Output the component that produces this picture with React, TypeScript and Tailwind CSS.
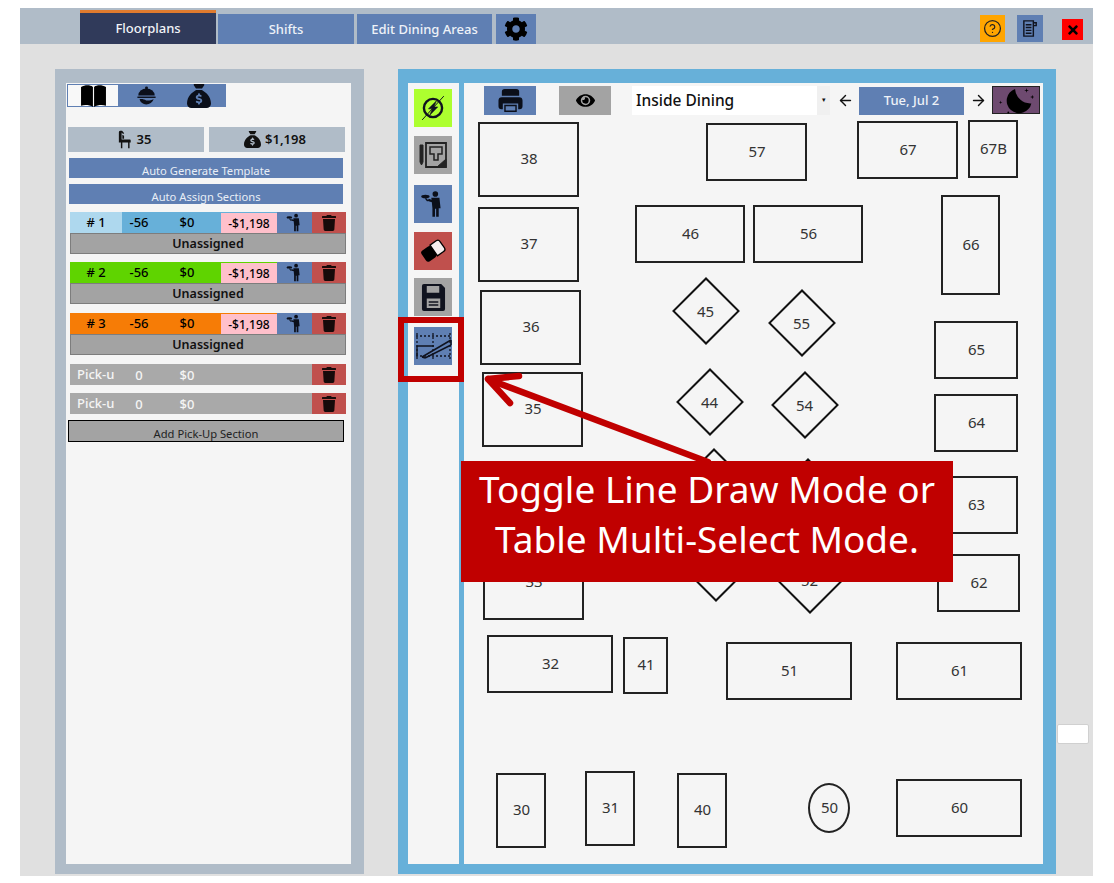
import { ArrowLeft, ArrowRight, CircleHelp } from "lucide-react";
import { FaCog, FaEye, FaTimes, FaTrash } from "react-icons/fa";
import { FaSackDollar } from "react-icons/fa6";

const font = "font-['Noto_Sans','Open_Sans',sans-serif]";

const rectTables = [
  { label: "38", box: "left-[14px] top-[39px] w-[101px] h-[75px]" },
  { label: "37", box: "left-[14px] top-[124px] w-[101px] h-[75px]" },
  { label: "36", box: "left-[16px] top-[207px] w-[101px] h-[75px]" },
  { label: "35", box: "left-[18px] top-[289px] w-[101px] h-[75px]" },
  { label: "33", box: "left-[19px] top-[462px] w-[101px] h-[75px]" },
  { label: "32", box: "left-[23px] top-[552px] w-[126px] h-[58px]" },
  { label: "41", box: "left-[159px] top-[554px] w-[45px] h-[57px]" },
  { label: "51", box: "left-[262px] top-[559px] w-[126px] h-[58px]" },
  { label: "61", box: "left-[432px] top-[559px] w-[126px] h-[58px]" },
  { label: "30", box: "left-[32px] top-[690px] w-[50px] h-[75px]" },
  { label: "31", box: "left-[121px] top-[688px] w-[50px] h-[75px]" },
  { label: "40", box: "left-[213px] top-[690px] w-[50px] h-[75px]" },
  { label: "50", box: "left-[344px] top-[700px] w-[42px] h-[50px] rounded-[50%]" },
  { label: "60", box: "left-[432px] top-[696px] w-[126px] h-[58px]" },
  { label: "57", box: "left-[242px] top-[40px] w-[101px] h-[58px]" },
  { label: "67", box: "left-[393px] top-[38px] w-[101px] h-[58px]" },
  { label: "67B", box: "left-[504px] top-[37px] w-[50px] h-[58px]" },
  { label: "46", box: "left-[171px] top-[122px] w-[110px] h-[58px]" },
  { label: "56", box: "left-[289px] top-[122px] w-[110px] h-[58px]" },
  { label: "66", box: "left-[477px] top-[112px] w-[59px] h-[100px]" },
  { label: "65", box: "left-[470px] top-[238px] w-[84px] h-[58px]" },
  { label: "64", box: "left-[470px] top-[311px] w-[84px] h-[58px]" },
  { label: "63", box: "left-[470px] top-[393px] w-[84px] h-[58px]" },
  { label: "62", box: "left-[473px] top-[471px] w-[83px] h-[58px]" },
];

const diamondTables = [
  { label: "45", box: "left-[218px] top-[204px]" },
  { label: "55", box: "left-[314px] top-[216px]" },
  { label: "44", box: "left-[222px] top-[295px]" },
  { label: "54", box: "left-[317px] top-[298px]" },
  { label: "43", box: "left-[226px] top-[375px]" },
  { label: "53", box: "left-[320px] top-[385px]" },
  { label: "42", box: "left-[228px] top-[461px]" },
  { label: "52", box: "left-[322px] top-[473px]" },
];

const sections = [
  { num: "# 1", numBg: "bg-[#aed8ee]", bg: "bg-[#67b0d9]" },
  { num: "# 2", numBg: "bg-[#5fd400]", bg: "bg-[#5fd400]" },
  { num: "# 3", numBg: "bg-[#f67c06]", bg: "bg-[#f67c06]" },
];

function Waiter({ className = "" }: { className?: string }) {
  return (
    <svg viewBox="0 0 24 24" className={className} fill="currentColor">
      <circle cx="14" cy="3.4" r="2.4" />
      <path d="M10.5 6.6h7l1 9h-1.6V23h-2.2v-7h-1v7h-2.2v-7.4L11 10.5 7.6 9.4l.6-1.8 2.6.8z" />
      <ellipse cx="5.5" cy="5.6" rx="3.6" ry="1.5" />
      <path d="M4.8 7h1.6l1.6 2-1 .8z" />
    </svg>
  );
}

function BookIcon() {
  return (
    <svg viewBox="0 0 28 24" className="w-[27px] h-[23px]" fill="currentColor">
      <path d="M1 3c4-2 9-2.4 12.4 0v21C10 21.8 5 21.4 1 22.600z" />
      <path d="M27 3c-4-2-9-2.4-12.4 0v21c3.400-2.200 8.400-2.600 12.400-1.400z" />
    </svg>
  );
}

function ClocheIcon() {
  return (
    <svg viewBox="0 0 24 24" className="w-[21px] h-[21px]" fill="currentColor">
      <circle cx="12" cy="3.500" r="1.700" />
      <path d="M2.600 12a9.400 8 0 0 1 18.800 0z" />
      <rect x="1.600" y="13.200" width="20.800" height="1.600" />
      <path d="M4 16.400c2.600-.8 5.400.2 7.600 1.200 2.200.4 5.400.2 8.600-1.200-1.200 3.600-4.600 5.800-8.600 5.800-3.400 0-6.600-2-7.600-5.800z" />
    </svg>
  );
}

function ChairIcon() {
  return (
    <svg viewBox="0 0 18 26" className="w-[13px] h-[19px]" fill="currentColor">
      <path d="M3 1h2.600l3 3.400-1.600 1L5 3.400V13h11c1 0 1.600.7 1.600 1.600V17H16v8h-2v-8H6v8H4v-8H1.200V4C1.200 2.200 1.800 1 3 1z" />
      <path d="M6 6.500l2.400 1.200V12H6z" />
    </svg>
  );
}

function BoltOff() {
  return (
    <svg viewBox="0 0 24 24" className="w-[26px] h-[26px]" fill="none" stroke="currentColor">
      <circle cx="12" cy="12" r="8.400" strokeWidth="2.200" />
      <path d="M15.200 5.400 7.800 12.800h3.600l-2.400 5.800 7.400-7.600h-3.600z" fill="currentColor" strokeWidth="0.500" />
      <path d="M2 23 22 1" strokeWidth="0.900" />
    </svg>
  );
}

function PlanIcon() {
  return (
    <svg viewBox="0 0 30 30" className="w-[30px] h-[30px]" fill="none" stroke="#222">
      <path d="M2 5h3v17l-1.500 3L2 22z" fill="#222" strokeWidth="1" />
      <path d="M8 3h20v24H8z" strokeWidth="1.800" />
      <path d="M12 7h12v7h-4v6h-4v-6h-4z" strokeWidth="1.500" />
      <path d="M28 19v8h-9z" fill="#222" strokeWidth="1" />
    </svg>
  );
}

function EraserIcon() {
  return (
    <svg viewBox="0 0 30 30" className="w-[28px] h-[28px]">
      <g transform="rotate(-35 15 15)">
        <rect x="3" y="8" width="13" height="14" rx="3" fill="#000" />
        <path d="M16 8h8a3 3 0 0 1 3 3v8a3 3 0 0 1-3 3h-8z" fill="#f5eeee" stroke="#000" strokeWidth="1.400" />
      </g>
    </svg>
  );
}

function SaveIcon() {
  return (
    <svg viewBox="0 0 26 30" className="w-[25px] h-[29px]" fill="#10131f">
      <path fillRule="evenodd" d="M3 1h18l4 4v22a2 2 0 0 1-2 2H3a2 2 0 0 1-2-2V3a2 2 0 0 1 2-2zm3 2v7h13V3zm0 13v10h14V16z" />
      <path d="M8 19h10v1.500H8zM8 22h10v1.500H8z" />
    </svg>
  );
}

function PrintIcon() {
  return (
    <svg viewBox="0 0 26 26" className="w-[25px] h-[25px]" fill="#0b0f1a">
      <path fillRule="evenodd" d="M7 1h12a3 3 0 0 1 3 3v4H4V4a3 3 0 0 1 3-3zM4 9.500h18a3.500 3.500 0 0 1 3.500 3.500v6a3 3 0 0 1-3 3H21v-6H5v6H3.500a3 3 0 0 1-3-3v-6A3.500 3.500 0 0 1 4 9.500z" />
      <path d="M6.500 17.500h13V25h-13zM8 19v4.500h10V19z" fillRule="evenodd" />
    </svg>
  );
}

function LineDrawIcon() {
  return (
    <svg viewBox="0 0 38 38" className="w-[38px] h-[38px]" fill="none" stroke="#10131f">
      <path d="M2 9h34M2 29h34M3 6v26M19 6v26M36 6v26" strokeWidth="1.300" strokeDasharray="2 2" />
      <path d="M3 29V19h17" strokeWidth="1.400" />
      <path d="M8 30 37 13M11 31 37 18M37 13v5" strokeWidth="1.500" />
      <path d="M8 30l3 1" strokeWidth="1.600" />
    </svg>
  );
}

function MoonIcon() {
  return (
    <svg viewBox="0 0 48 28" className="w-[46px] h-[27px]" fill="#000">
      <path d="M23 2A13 13 0 1 0 40 17 A16 16 0 0 1 23 2z" />
      <path d="M35 1l.5 2 2 .5-2 .5-.5 2-.5-2-2-.5 2-.5zM41 8l.5 1.800 1.800.5-1.800.5-.5 1.800-.5-1.800-1.800-.5 1.800-.5zM8 14l.4 1.500 1.500.4-1.500.4-.4 1.500-.4-1.500-1.500-.4 1.500-.4z" />
      <circle cx="16" cy="26.500" r="1" />
    </svg>
  );
}

function ToolButton({ bg, mt, children }: { bg: string; mt: string; children: React.ReactNode }) {
  return <div className={`w-[38px] h-[38px] ml-[6px] flex items-center justify-center ${bg} ${mt}`}>{children}</div>;
}

function SectionCard({ num, numBg, bg, mt }: { num: string; numBg: string; bg: string; mt: string }) {
  return (
    <div className={`ml-[4px] w-[276px] ${mt}`}>
      <div className={`h-[21px] flex items-center text-[13px] font-medium text-black ${bg}`}>
        <div className={`w-[52px] h-full flex items-center justify-center ${numBg}`}>{num}</div>
        <div className="w-[34px] text-center pt-[1px]">-56</div>
        <div className="w-[62px] text-center pt-[1px]">$0</div>
        <div className="w-[3px]" />
        <div className="w-[56px] h-[20px] mt-[1px] bg-[#ffc0cb] flex items-center justify-center text-[12px] pt-[1px]">-$1,198</div>
        <div className="w-[35px] h-full bg-[#5f7fb3] flex items-center justify-center">
          <Waiter className="w-[19px] h-[19px] text-[#0b0f1a]" />
        </div>
        <div className="flex-1 h-full bg-[#c0504d] flex items-center justify-center text-[#160a0a]">
          <FaTrash size={16} />
        </div>
      </div>
      <div className="h-[21px] bg-[#a3a3a3] border border-[#7d7d7d] flex items-center justify-center pt-[1px] text-[12.5px] font-semibold text-[#111]">
        Unassigned
      </div>
    </div>
  );
}

function PickupRow({ mt }: { mt: string }) {
  return (
    <div className={`ml-[4px] w-[276px] h-[21px] bg-[#a9a9a9] flex items-center pt-[1px] text-[13px] font-medium text-[#f5f5f5] ${mt}`}>
      <div className="w-[52px] pl-[7px] whitespace-nowrap">Pick-u</div>
      <div className="w-[34px] text-center pt-[1px]">0</div>
      <div className="w-[62px] text-center pt-[1px]">$0</div>
      <div className="flex-1" />
      <div className="w-[34px] h-[21px] -mt-[1px] bg-[#c0504d] flex items-center justify-center text-[#160a0a]">
        <FaTrash size={16} />
      </div>
    </div>
  );
}

function LeftPanel() {
  return (
    <aside className="w-[309px] h-[805px] bg-[#b0bcc8] pl-[11px] pr-[13px] pt-[14px] pb-[10px]">
      <div className="h-full bg-[#f5f5f5] pt-[1px]">
        <div className="flex h-[23px] ml-[1px]">
          <div className="w-[52px] bg-[#f8f8f8] border border-[#5f7fb3] flex items-center justify-center text-black">
            <BookIcon />
          </div>
          <div className="w-[107px] bg-[#5f7fb3] flex items-center text-[#0b0f1a]">
            <div className="ml-[17px]">
              <ClocheIcon />
            </div>
            <div className="ml-[30px]">
              <FaSackDollar size={24} />
            </div>
          </div>
        </div>
        <div className="flex gap-[5px] ml-[2px] mt-[20px] text-[13px] font-semibold text-[#111]">
          <div className="w-[136px] h-[25px] bg-[#b0bcc8] flex items-center justify-center gap-[6px] pr-[3px]">
            <ChairIcon />
            35
          </div>
          <div className="w-[136px] h-[25px] bg-[#b0bcc8] flex items-center justify-center gap-[4px] pr-[4px]">
            <FaSackDollar size={17} />
            $1,198
          </div>
        </div>
        <div className="ml-[3px] mt-[6px] w-[274px] h-[20px] bg-[#5f7fb3] overflow-hidden text-center text-[11.2px] leading-[16px] pt-[5px] text-[#e8eef6]">
          Auto Generate Template
        </div>
        <div className="ml-[3px] mt-[6px] w-[274px] h-[20px] bg-[#5f7fb3] overflow-hidden text-center text-[11.2px] leading-[16px] pt-[5px] text-[#e8eef6]">
          Auto Assign Sections
        </div>
        <SectionCard {...sections[0]} mt="mt-[8px]" />
        <SectionCard {...sections[1]} mt="mt-[8px]" />
        <SectionCard {...sections[2]} mt="mt-[9px]" />
        <PickupRow mt="mt-[9px]" />
        <PickupRow mt="mt-[8px]" />
        <div className="ml-[2px] mt-[6px] w-[276px] h-[22px] bg-[#a3a3a3] border border-black overflow-hidden text-center text-[11.2px] leading-[16px] pt-[5px] text-[#222]">
          Add Pick-Up Section
        </div>
      </div>
    </aside>
  );
}

function Canvas() {
  return (
    <div className="relative flex-1 bg-[#f5f5f5]">
      <div className="flex items-start pl-[20px] pt-[3px]">
        <div className="w-[52px] h-[29px] bg-[#5f7fb3] flex items-center justify-center">
          <PrintIcon />
        </div>
        <div className="w-[52px] h-[29px] ml-[23px] bg-[#a3a3a3] flex items-center justify-center text-black">
          <FaEye size={19} />
        </div>
        <div className="w-[198px] h-[29px] ml-[21px] bg-white flex items-center text-[15.5px] font-medium text-[#111]">
          <span className="pl-[4px] flex-1">Inside Dining</span>
          <span className="w-[13px] h-full bg-[#f0f0f0] flex items-center justify-center text-[7px]">▾</span>
        </div>
        <ArrowLeft size={17} strokeWidth={2} className="ml-[7px] mt-[6px] text-[#111]" />
        <div className="w-[105px] h-[28px] ml-[5px] mt-[1px] bg-[#5f7fb3] flex items-center justify-center text-[13px] font-medium text-[#eef2f8]">
          Tue, Jul 2
        </div>
        <ArrowRight size={17} strokeWidth={2} className="ml-[6px] mt-[6px] text-[#111]" />
        <div className="w-[48px] h-[28px] ml-[5px] bg-[#6e4a70] border border-[#222] flex items-center justify-center">
          <MoonIcon />
        </div>
      </div>
      {rectTables.map((t) => (
        <div
          key={t.label}
          className={`absolute ${t.box} border-2 border-[#222] flex items-center justify-center pl-[1px] pb-[2px] text-[15px] text-[#333]`}
        >
          {t.label}
        </div>
      ))}
      {diamondTables.map((t) => (
        <div
          key={t.label}
          className={`absolute ${t.box} w-[48px] h-[48px] rotate-45 border-2 border-[#111] flex items-center justify-center text-[15px] text-[#333]`}
        >
          <span className="-rotate-45">{t.label}</span>
        </div>
      ))}
    </div>
  );
}

function ToolColumn() {
  return (
    <div className="w-[51px] h-full bg-[#f5f5f5] pt-[6px] shrink-0">
      <ToolButton bg="bg-[#adff2f] text-[#10131f]" mt="">
        <BoltOff />
      </ToolButton>
      <ToolButton bg="bg-[#a3a3a3]" mt="mt-[9px]">
        <PlanIcon />
      </ToolButton>
      <ToolButton bg="bg-[#5f7fb3] text-[#0b0f1a]" mt="mt-[11px]">
        <Waiter className="w-[28px] h-[28px]" />
      </ToolButton>
      <ToolButton bg="bg-[#c0504d]" mt="mt-[9px]">
        <EraserIcon />
      </ToolButton>
      <ToolButton bg="bg-[#a3a3a3]" mt="mt-[8px]">
        <SaveIcon />
      </ToolButton>
      <ToolButton bg="bg-[#5f7fb3]" mt="mt-[11px]">
        <LineDrawIcon />
      </ToolButton>
    </div>
  );
}

function Header() {
  return (
    <header className="h-[36px] bg-[#b0bcc8] flex items-end pl-[60px] relative">
      <div className="w-[136px] h-[34px] bg-[#303a5a] border-t-[3px] border-[#e07b2e] flex items-center justify-center pt-[1px] text-[13px] font-medium text-[#f2f4f8]">
        Floorplans
      </div>
      <div className="w-[136px] h-[30px] ml-[2px] bg-[#5f7fb3] flex items-center justify-center pt-[1px] text-[13px] font-medium text-[#eef2f8]">
        Shifts
      </div>
      <div className="w-[135px] h-[30px] ml-[3px] bg-[#5f7fb3] flex items-center justify-center pt-[1px] text-[13px] font-medium text-[#eef2f8]">
        Edit Dining Areas
      </div>
      <div className="w-[40px] h-[30px] ml-[4px] bg-[#5f7fb3] flex items-center justify-center text-black">
        <FaCog size={24} />
      </div>
      <div className="flex-1" />
      <div className="self-start mt-[7px] w-[25px] h-[27px] bg-[#ffa500] flex items-center justify-center">
        <CircleHelp size={19} strokeWidth={1.6} className="text-[#222]" />
      </div>
      <div className="self-start mt-[7px] ml-[12px] w-[26px] h-[27px] bg-[#5f7fb3] flex items-center justify-center">
        <svg viewBox="0 0 20 20" className="w-[19px] h-[19px]" fill="none" stroke="#10131f" strokeWidth="1.500">
          <path d="M3 2h10v16H3zM5 6h6M5 9h6M5 12h6M5 15h6" />
          <path d="M13 4h3v3h-3" />
        </svg>
      </div>
      <div className="self-start mt-[11px] ml-[19px] mr-[10px] w-[21px] h-[21px] bg-[#ff0000] flex items-center justify-center text-black">
        <FaTimes size={14} />
      </div>
    </header>
  );
}

function Callout() {
  return (
    <>
      <div className="absolute left-[398px] top-[317px] w-[66px] h-[65px] border-[6px] border-[#c00000]" />
      <svg className="absolute left-[470px] top-[360px] w-[250px] h-[110px]" viewBox="0 0 250 110" fill="none" stroke="#c00000" strokeWidth="6.500" strokeLinecap="round">
        <path d="M238 102 20 20" />
        <path d="M18 19 49 16M18 19 40 43" />
      </svg>
      <div className={`absolute left-[461px] top-[461px] w-[492px] h-[121px] bg-[#c00000] flex items-center justify-center pb-[16px] text-center text-[37px] leading-[50px] text-white ${font}`}>
        <div>
          Toggle Line Draw Mode or
          <br />
          Table Multi-Select Mode.
        </div>
      </div>
    </>
  );
}

export default function App() {
  return (
    <div className={`relative w-[1114px] h-[883px] bg-white overflow-hidden ${font}`}>
      <div className="ml-[20px] mt-[8px] w-[1073px] h-[868px] bg-[#e0e0e0] flex flex-col absolute">
        <Header />
        <div className="flex pl-[35px] pt-[25px] relative">
          <LeftPanel />
          <main className="w-[658px] h-[805px] ml-[34px] bg-[#67b0d9] pl-[10px] pr-[13px] pt-[14px] pb-[10px] flex gap-[5px]">
            <ToolColumn />
            <Canvas />
          </main>
          <div className="absolute left-[1037px] top-[680px] w-[32px] h-[20px] bg-white rounded-[2px] border border-[#d0d0d0]" />
        </div>
      </div>
      <Callout />
    </div>
  );
}
